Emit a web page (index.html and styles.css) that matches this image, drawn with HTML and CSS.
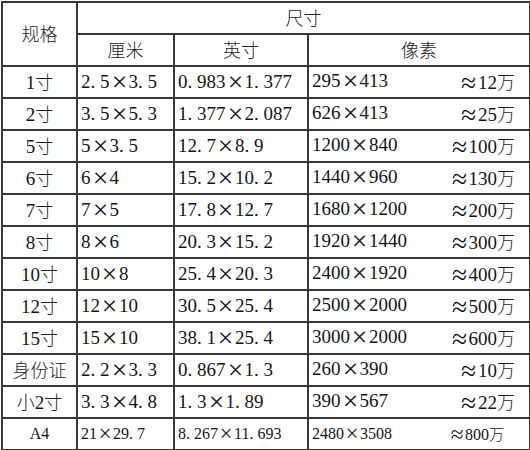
FILE: index.html
```html
<!DOCTYPE html>
<html lang="zh-CN">
<head>
<meta charset="utf-8">
<title>照片尺寸对照表</title>
<link rel="stylesheet" href="styles.css">
</head>
<body>
<table class="spec">
  <colgroup>
    <col class="c1"><col class="c2"><col class="c3"><col class="c4">
  </colgroup>
  <thead>
    <tr>
      <th rowspan="2"><span class="cjk">规格</span></th>
      <th colspan="3"><span class="cjk">尺寸</span></th>
    </tr>
    <tr>
      <th><span class="cjk">厘米</span></th>
      <th><span class="cjk">英寸</span></th>
      <th><span class="cjk">像素</span></th>
    </tr>
  </thead>
  <tbody>
    <tr><td class="name">1<span class="cjk">寸</span></td><td class="mono">2<span class="p">.</span>5<span class="x">×</span>3<span class="p">.</span>5</td><td class="mono">0<span class="p">.</span>983<span class="x">×</span>1<span class="p">.</span>377</td><td class="px"><div class="pxrow"><span>295<span class="x">×</span>413</span><span><span class="x">≈</span>12<span class="cjk">万</span></span></div></td></tr>
    <tr><td class="name">2<span class="cjk">寸</span></td><td class="mono">3<span class="p">.</span>5<span class="x">×</span>5<span class="p">.</span>3</td><td class="mono">1<span class="p">.</span>377<span class="x">×</span>2<span class="p">.</span>087</td><td class="px"><div class="pxrow"><span>626<span class="x">×</span>413</span><span><span class="x">≈</span>25<span class="cjk">万</span></span></div></td></tr>
    <tr><td class="name">5<span class="cjk">寸</span></td><td class="mono">5<span class="x">×</span>3<span class="p">.</span>5</td><td class="mono">12<span class="p">.</span>7<span class="x">×</span>8<span class="p">.</span>9</td><td class="px"><div class="pxrow"><span>1200<span class="x">×</span>840</span><span><span class="x">≈</span>100<span class="cjk">万</span></span></div></td></tr>
    <tr><td class="name">6<span class="cjk">寸</span></td><td class="mono">6<span class="x">×</span>4</td><td class="mono">15<span class="p">.</span>2<span class="x">×</span>10<span class="p">.</span>2</td><td class="px"><div class="pxrow"><span>1440<span class="x">×</span>960</span><span><span class="x">≈</span>130<span class="cjk">万</span></span></div></td></tr>
    <tr><td class="name">7<span class="cjk">寸</span></td><td class="mono">7<span class="x">×</span>5</td><td class="mono">17<span class="p">.</span>8<span class="x">×</span>12<span class="p">.</span>7</td><td class="px"><div class="pxrow"><span>1680<span class="x">×</span>1200</span><span><span class="x">≈</span>200<span class="cjk">万</span></span></div></td></tr>
    <tr><td class="name">8<span class="cjk">寸</span></td><td class="mono">8<span class="x">×</span>6</td><td class="mono">20<span class="p">.</span>3<span class="x">×</span>15<span class="p">.</span>2</td><td class="px"><div class="pxrow"><span>1920<span class="x">×</span>1440</span><span><span class="x">≈</span>300<span class="cjk">万</span></span></div></td></tr>
    <tr><td class="name">10<span class="cjk">寸</span></td><td class="mono">10<span class="x">×</span>8</td><td class="mono">25<span class="p">.</span>4<span class="x">×</span>20<span class="p">.</span>3</td><td class="px"><div class="pxrow"><span>2400<span class="x">×</span>1920</span><span><span class="x">≈</span>400<span class="cjk">万</span></span></div></td></tr>
    <tr><td class="name">12<span class="cjk">寸</span></td><td class="mono">12<span class="x">×</span>10</td><td class="mono">30<span class="p">.</span>5<span class="x">×</span>25<span class="p">.</span>4</td><td class="px"><div class="pxrow"><span>2500<span class="x">×</span>2000</span><span><span class="x">≈</span>500<span class="cjk">万</span></span></div></td></tr>
    <tr><td class="name">15<span class="cjk">寸</span></td><td class="mono">15<span class="x">×</span>10</td><td class="mono">38<span class="p">.</span>1<span class="x">×</span>25<span class="p">.</span>4</td><td class="px"><div class="pxrow"><span>3000<span class="x">×</span>2000</span><span><span class="x">≈</span>600<span class="cjk">万</span></span></div></td></tr>
    <tr><td class="name"><span class="cjk">身份证</span></td><td class="mono">2<span class="p">.</span>2<span class="x">×</span>3<span class="p">.</span>3</td><td class="mono">0<span class="p">.</span>867<span class="x">×</span>1<span class="p">.</span>3</td><td class="px"><div class="pxrow"><span>260<span class="x">×</span>390</span><span><span class="x">≈</span>10<span class="cjk">万</span></span></div></td></tr>
    <tr><td class="name"><span class="cjk">小</span>2<span class="cjk">寸</span></td><td class="mono">3<span class="p">.</span>3<span class="x">×</span>4<span class="p">.</span>8</td><td class="mono">1<span class="p">.</span>3<span class="x">×</span>1<span class="p">.</span>89</td><td class="px"><div class="pxrow"><span>390<span class="x">×</span>567</span><span><span class="x">≈</span>22<span class="cjk">万</span></span></div></td></tr>
    <tr class="small"><td class="name">A4</td><td class="mono">21<span class="x">×</span>29<span class="p">.</span>7</td><td class="mono">8<span class="p">.</span>267<span class="x">×</span>11<span class="p">.</span>693</td><td class="px"><div class="pxrow wide"><span>2480<span class="x">×</span>3508</span><span><span class="x">≈</span>800<span class="cjk">万</span></span></div></td></tr>
  </tbody>
</table>
</body>
</html>
```

FILE: styles.css
```css
html, body {
  margin: 0;
  background: #ffffff;
}

body {
  padding: 1px 0 0 1px;
  font-family: "Liberation Serif", "Noto Sans CJK SC", serif;
  font-size: 19px;
  color: #151515;
}

.spec {
  border-collapse: collapse;
  table-layout: fixed;
  width: 528px;
}

.c1 { width: 75px; }
.c2 { width: 97px; }
.c3 { width: 134px; }
.c4 { width: 222px; }

.spec tr {
  height: 32px;
}

.spec th,
.spec td {
  border: 2px solid #383838;
  padding: 0;
  font-weight: normal;
  line-height: 28px;
  white-space: nowrap;
}

.spec th {
  text-align: center;
}

.spec .cjk {
  font-family: "Noto Sans CJK SC", sans-serif;
  font-weight: 300;
  font-size: 18px;
  color: #222222;
}

.name {
  text-align: center;
}

.spec .mono,
.spec .px {
  text-align: left;
  padding-left: 3px;
}

.p {
  display: inline-block;
  width: 0.5em;
  text-align: left;
}

.x {
  display: inline-block;
  width: 1em;
  text-align: center;
  transform: scale(1.45);
}

.pxrow {
  display: flex;
  justify-content: space-between;
  padding-right: 14px;
}

.pxrow.wide {
  padding-right: 25px;
}

.spec .small td {
  font-size: 16px;
}

.spec .small .cjk {
  font-size: 15px;
}
```
